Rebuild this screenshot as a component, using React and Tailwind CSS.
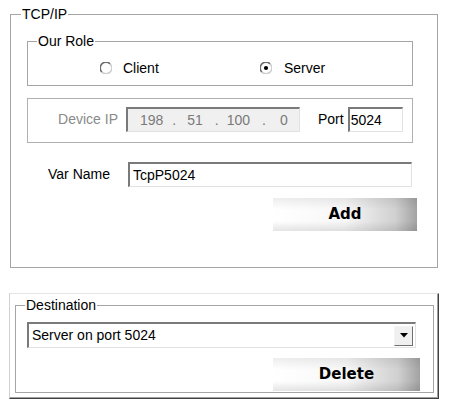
import React from "react";

const font = "font-['Liberation_Sans',Arial,sans-serif]";

const sunken =
  "border-t-2 border-l-2 border-b border-r border-t-[#7a7a7a] border-l-[#7a7a7a] border-b-[#e2e2e2] border-r-[#e2e2e2]";

const bigBtn =
  "flex items-center justify-center font-['DejaVu_Sans',Verdana,sans-serif] font-bold text-[15px] text-black bg-[linear-gradient(to_bottom,rgba(0,0,0,0.07),rgba(255,255,255,0)_35%,rgba(255,255,255,0)_70%,rgba(0,0,0,0.1)),linear-gradient(to_right,#ffffff_0%,#f7f7f7_50%,#d0d0d0_85%,#a2a2a2_100%)]";

function Radio({ checked }) {
  return (
    <svg width="12" height="12" viewBox="0 0 12 12" className="shrink-0">
      <circle cx="6" cy="6" r="5" fill="#fff" />
      <path d="M1.9 10.1 A5.6 5.6 0 0 1 10.1 1.9" fill="none" stroke="#6f6f6f" strokeWidth="1.6" />
      <path d="M10.1 1.9 A5.6 5.6 0 0 1 1.9 10.1" fill="none" stroke="#cfcfcf" strokeWidth="1.5" />
      {checked && <circle cx="6" cy="6" r="2.1" fill="#000" />}
    </svg>
  );
}

export default function App() {
  return (
    <div className={`w-[450px] h-[405px] bg-white pt-[6px] text-[14px] leading-[17px] text-black ${font}`}>
      {/* TCP/IP group */}
      <fieldset className="ml-[10px] w-[428px] border border-[#a5a5a5] pb-[36px]">
        <legend className="ml-[10px] px-[1px] leading-[17px]">TCP/IP</legend>

        {/* Our Role */}
        <fieldset className="ml-[16px] mt-[10px] w-[386px] border border-[#a5a5a5] pt-[8px] pb-[7px]">
          <legend className="ml-[9px] px-[1px] leading-[17px]">Our Role</legend>
          <div className="flex h-[20px] items-center pl-[72px]">
            <div className="flex w-[160px] items-center gap-[11px]">
              <Radio />
              <span>Client</span>
            </div>
            <div className="flex items-center gap-[12px]">
              <Radio checked />
              <span>Server</span>
            </div>
          </div>
        </fieldset>

        {/* Device IP / Port */}
        <div className="ml-[16px] mt-[12px] w-[386px] border border-[#b0b0b0] pt-[8px] pb-[10px]">
          <div className="flex items-center">
            <div className="w-[90px] text-right text-[#8a8a8a]">Device IP</div>
            <div className={`ml-[8px] flex h-[25px] w-[174px] items-center bg-[#f0f0f0] pl-[12px] text-[#7a7a7a] ${sunken}`}>
              <span>198</span>
              <span className="ml-[9px]">.</span>
              <span className="ml-[11px]">51</span>
              <span className="ml-[12px]">.</span>
              <span className="ml-[8px]">100</span>
              <span className="ml-[12px]">.</span>
              <span className="ml-[14px]">0</span>
            </div>
            <div className="ml-[18px]">Port</div>
            <div className={`ml-[4px] flex h-[25px] w-[55px] items-center bg-white pl-[1px] ${sunken}`}>5024</div>
          </div>
        </div>

        {/* Var Name */}
        <div className="mt-[19px] flex items-center">
          <div className="w-[117px] pl-[37px]">Var Name</div>
          <div className={`flex h-[25px] w-[284px] items-center bg-white pl-[3px] ${sunken}`}>TcpP5024</div>
        </div>

        <div className="mt-[11px] flex justify-end pr-[20px]">
          <button className={`h-[33px] w-[144px] ${bigBtn}`}>Add</button>
        </div>
      </fieldset>

      {/* Destination panel */}
      <div className="ml-[9px] mt-[25px] h-[106px] w-[430px] border border-t-[#e4e4e4] border-l-[#d0d0d0] border-r-[#404040] border-b-[#404040] shadow-[inset_-1px_-1px_0_#a0a0a0,inset_1px_1px_0_#ffffff]">
        <fieldset className="ml-[5px] mt-[3px] w-[419px] border border-[#a5a5a5] pb-[1px]">
          <legend className="ml-[9px] px-[1px] leading-[17px]">Destination</legend>
          <div className={`ml-[11px] mt-[8px] flex h-[26px] w-[389px] items-center justify-between bg-white pl-[3px] pr-[2px] ${sunken}`}>
            <span>Server on port 5024</span>
            <div className="flex h-[20px] w-[19px] items-center justify-center border border-t-[#f4f4f4] border-l-[#f4f4f4] border-r-[#707070] border-b-[#707070] bg-[#f0f0f0]">
              <svg width="8" height="5" viewBox="0 0 8 5">
                <path d="M0 0 H8 L4 4.5 Z" fill="#000" />
              </svg>
            </div>
          </div>
          <div className="mt-[10px] flex justify-end pr-[13px]">
            <button className={`h-[33px] w-[147px] ${bigBtn}`}>Delete</button>
          </div>
        </fieldset>
      </div>
    </div>
  );
}
